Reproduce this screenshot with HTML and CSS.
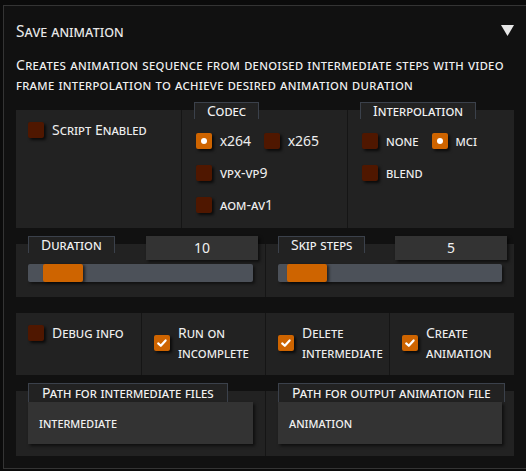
FILE: index.html
```html
<!DOCTYPE html>
<html>
<head>
<meta charset="utf-8">
<link rel="stylesheet" href="styles.css">
</head>
<body>
<div class="panel">
  <div class="head">
    <span class="title">Save animation</span>
    <svg class="caret" width="13" height="11" viewBox="0 0 13 11"><polygon points="0,0 13,0 6.5,11" fill="#e6e6e6"/></svg>
  </div>
  <div class="desc">Creates animation sequence from denoised intermediate steps with video frame interpolation to achieve desired animation duration</div>
  <div class="group">
    <div class="row row-a">
      <div class="cell cell-pad">
        <div class="check"><span class="box"></span><span class="lbl">Script Enabled</span></div>
      </div>
      <div class="cell cell-tab">
        <div class="tab">Codec</div>
        <div class="radios">
          <div class="check"><span class="box on"><span class="dot"></span></span><span class="lbl">x264</span></div>
          <div class="check"><span class="box"></span><span class="lbl">x265</span></div>
          <div class="check"><span class="box"></span><span class="lbl">vpx-vp9</span></div>
          <div class="check"><span class="box"></span><span class="lbl">aom-av1</span></div>
        </div>
      </div>
      <div class="cell cell-tab">
        <div class="tab">Interpolation</div>
        <div class="radios">
          <div class="check"><span class="box"></span><span class="lbl">none</span></div>
          <div class="check"><span class="box on"><span class="dot"></span></span><span class="lbl">mci</span></div>
          <div class="check"><span class="box"></span><span class="lbl">blend</span></div>
        </div>
      </div>
    </div>

    <div class="row row-b">
      <div class="cell cell-slider">
        <div class="slider-head">
          <div class="tab">Duration</div>
          <div class="num">10</div>
        </div>
        <div class="track"><span class="thumb" style="left:15px"></span></div>
      </div>
      <div class="cell cell-slider">
        <div class="slider-head">
          <div class="tab">Skip steps</div>
          <div class="num">5</div>
        </div>
        <div class="track"><span class="thumb" style="left:9px"></span></div>
      </div>
    </div>

    <div class="row row-c">
      <div class="cell cell-pad">
        <div class="check"><span class="box"></span><span class="lbl">Debug info</span></div>
      </div>
      <div class="cell cell-pad">
        <div class="check"><span class="box on"><svg width="16" height="16" viewBox="0 0 16 16"><path d="M4.2 8.4 L6.8 10.8 L11.6 5.4" fill="none" stroke="#fff" stroke-width="2.2" stroke-linecap="round" stroke-linejoin="round"/></svg></span><span class="lbl">Run on incomplete</span></div>
      </div>
      <div class="cell cell-pad">
        <div class="check"><span class="box on"><svg width="16" height="16" viewBox="0 0 16 16"><path d="M4.2 8.4 L6.8 10.8 L11.6 5.4" fill="none" stroke="#fff" stroke-width="2.2" stroke-linecap="round" stroke-linejoin="round"/></svg></span><span class="lbl">Delete intermediate</span></div>
      </div>
      <div class="cell cell-pad">
        <div class="check"><span class="box on"><svg width="16" height="16" viewBox="0 0 16 16"><path d="M4.2 8.4 L6.8 10.8 L11.6 5.4" fill="none" stroke="#fff" stroke-width="2.2" stroke-linecap="round" stroke-linejoin="round"/></svg></span><span class="lbl">Create animation</span></div>
      </div>
    </div>

    <div class="row row-b">
      <div class="cell cell-text">
        <div class="tab tab-path">Path for intermediate files</div>
        <div class="textbox">intermediate</div>
      </div>
      <div class="cell cell-text">
        <div class="tab tab-path">Path for output animation file</div>
        <div class="textbox">animation</div>
      </div>
    </div>
  </div>
</div>
</body>
</html>
```

FILE: styles.css
```css
html, body {
  margin: 0;
  padding: 0;
  background: #0b0b0b;
  overflow: hidden;
}
body {
  font-family: "Noto Sans", "DejaVu Sans", sans-serif;
  font-variant: small-caps;
  color: #eeeeee;
  font-size: 14px;
  line-height: 20px;
}
.panel {
  margin: 5px 0 0 3px;
  width: 498px;
  padding: 0 12px 12px 12px;
  border: 1px solid #343434;
  background: #111111;
}
.head {
  display: flex;
  align-items: center;
  justify-content: space-between;
  margin-top: 15px;
  height: 20px;
}
.title {
  font-size: 15.5px;
  line-height: 20px;
  color: #e8e8e8;
}
.caret {
  display: block;
  margin-top: -1px;
}
.desc {
  margin-top: 14px;
  font-size: 14px;
  letter-spacing: 0.3px;
  line-height: 20px;
  color: #f0f0f0;
}
.group {
  margin-top: 15px;
  display: flex;
  flex-direction: column;
  gap: 16px;
}
.row {
  display: grid;
  gap: 1px;
  background: #151515;
}
.row-a { grid-template-columns: 165px 165px 166px; }
.row-b { grid-template-columns: 249px 248px; }
.row-c { grid-template-columns: 125px 123px 123px 124px; }
.cell {
  background: #222222;
  display: flex;
  flex-direction: column;
  align-items: stretch;
}
.cell-pad { padding: 10px 12px 12px 12px; }
.cell-tab { padding: 0 12px 13px 12px; }
.cell-slider { padding: 0 12px 15px 12px; }
.cell-text { padding: 0 12px 12px 12px; }

.tab {
  align-self: flex-start;
  margin-top: -8px;
  height: 16px;
  line-height: 16px;
  padding: 0 12px 0 12px;
  border: 1px solid #3b414b;
  border-bottom: none;
  background: #222222;
  color: #f2f2f2;
  white-space: nowrap;
}
.radios {
  display: flex;
  flex-wrap: wrap;
  row-gap: 12px;
  column-gap: 13px;
  margin-top: 12px;
  padding-left: 2px;
}
.check {
  display: flex;
  align-items: center;
  gap: 8px;
  line-height: 20px;
}
.box {
  flex: none;
  width: 16px;
  height: 16px;
  border-radius: 2px;
  background: #4f1700;
  box-shadow: 2px 2px 3px rgba(0, 0, 0, 0.7);
  display: flex;
  align-items: center;
  justify-content: center;
}
.box.on { background: #ce6400; }
.box svg { display: block; }
.dot {
  width: 6px;
  height: 6px;
  border-radius: 50%;
  background: #ffffff;
}
.lbl { color: #eeeeee; }

.slider-head {
  display: flex;
  justify-content: space-between;
  align-items: flex-start;
  margin-top: -8px;
}
.slider-head .tab { margin-top: 0; }
.num {
  width: 112px;
  height: 24px;
  line-height: 24px;
  margin-right: -5px;
  background: #333333;
  text-align: center;
  box-shadow: 2px 2px 3px rgba(0, 0, 0, 0.6);
  color: #f0f0f0;
}
.track {
  position: relative;
  margin-top: 4px;
  height: 18px;
  background: #4c5159;
  border-radius: 2px;
  box-shadow: 2px 2px 3px rgba(0, 0, 0, 0.5);
}
.thumb {
  position: absolute;
  top: 0;
  width: 40px;
  height: 18px;
  border-radius: 2px;
  background: #ce6400;
  box-shadow: 2px 1px 3px rgba(0, 0, 0, 0.6);
}
.tab-path {
  height: 18px;
  line-height: 18px;
  padding: 0 13px;
}
.textbox {
  height: 42px;
  line-height: 42px;
  padding: 0 11px;
  background: #333333;
  box-shadow: 2px 2px 3px rgba(0, 0, 0, 0.6);
  color: #f0f0f0;
  font-size: 13.5px;
}
```
